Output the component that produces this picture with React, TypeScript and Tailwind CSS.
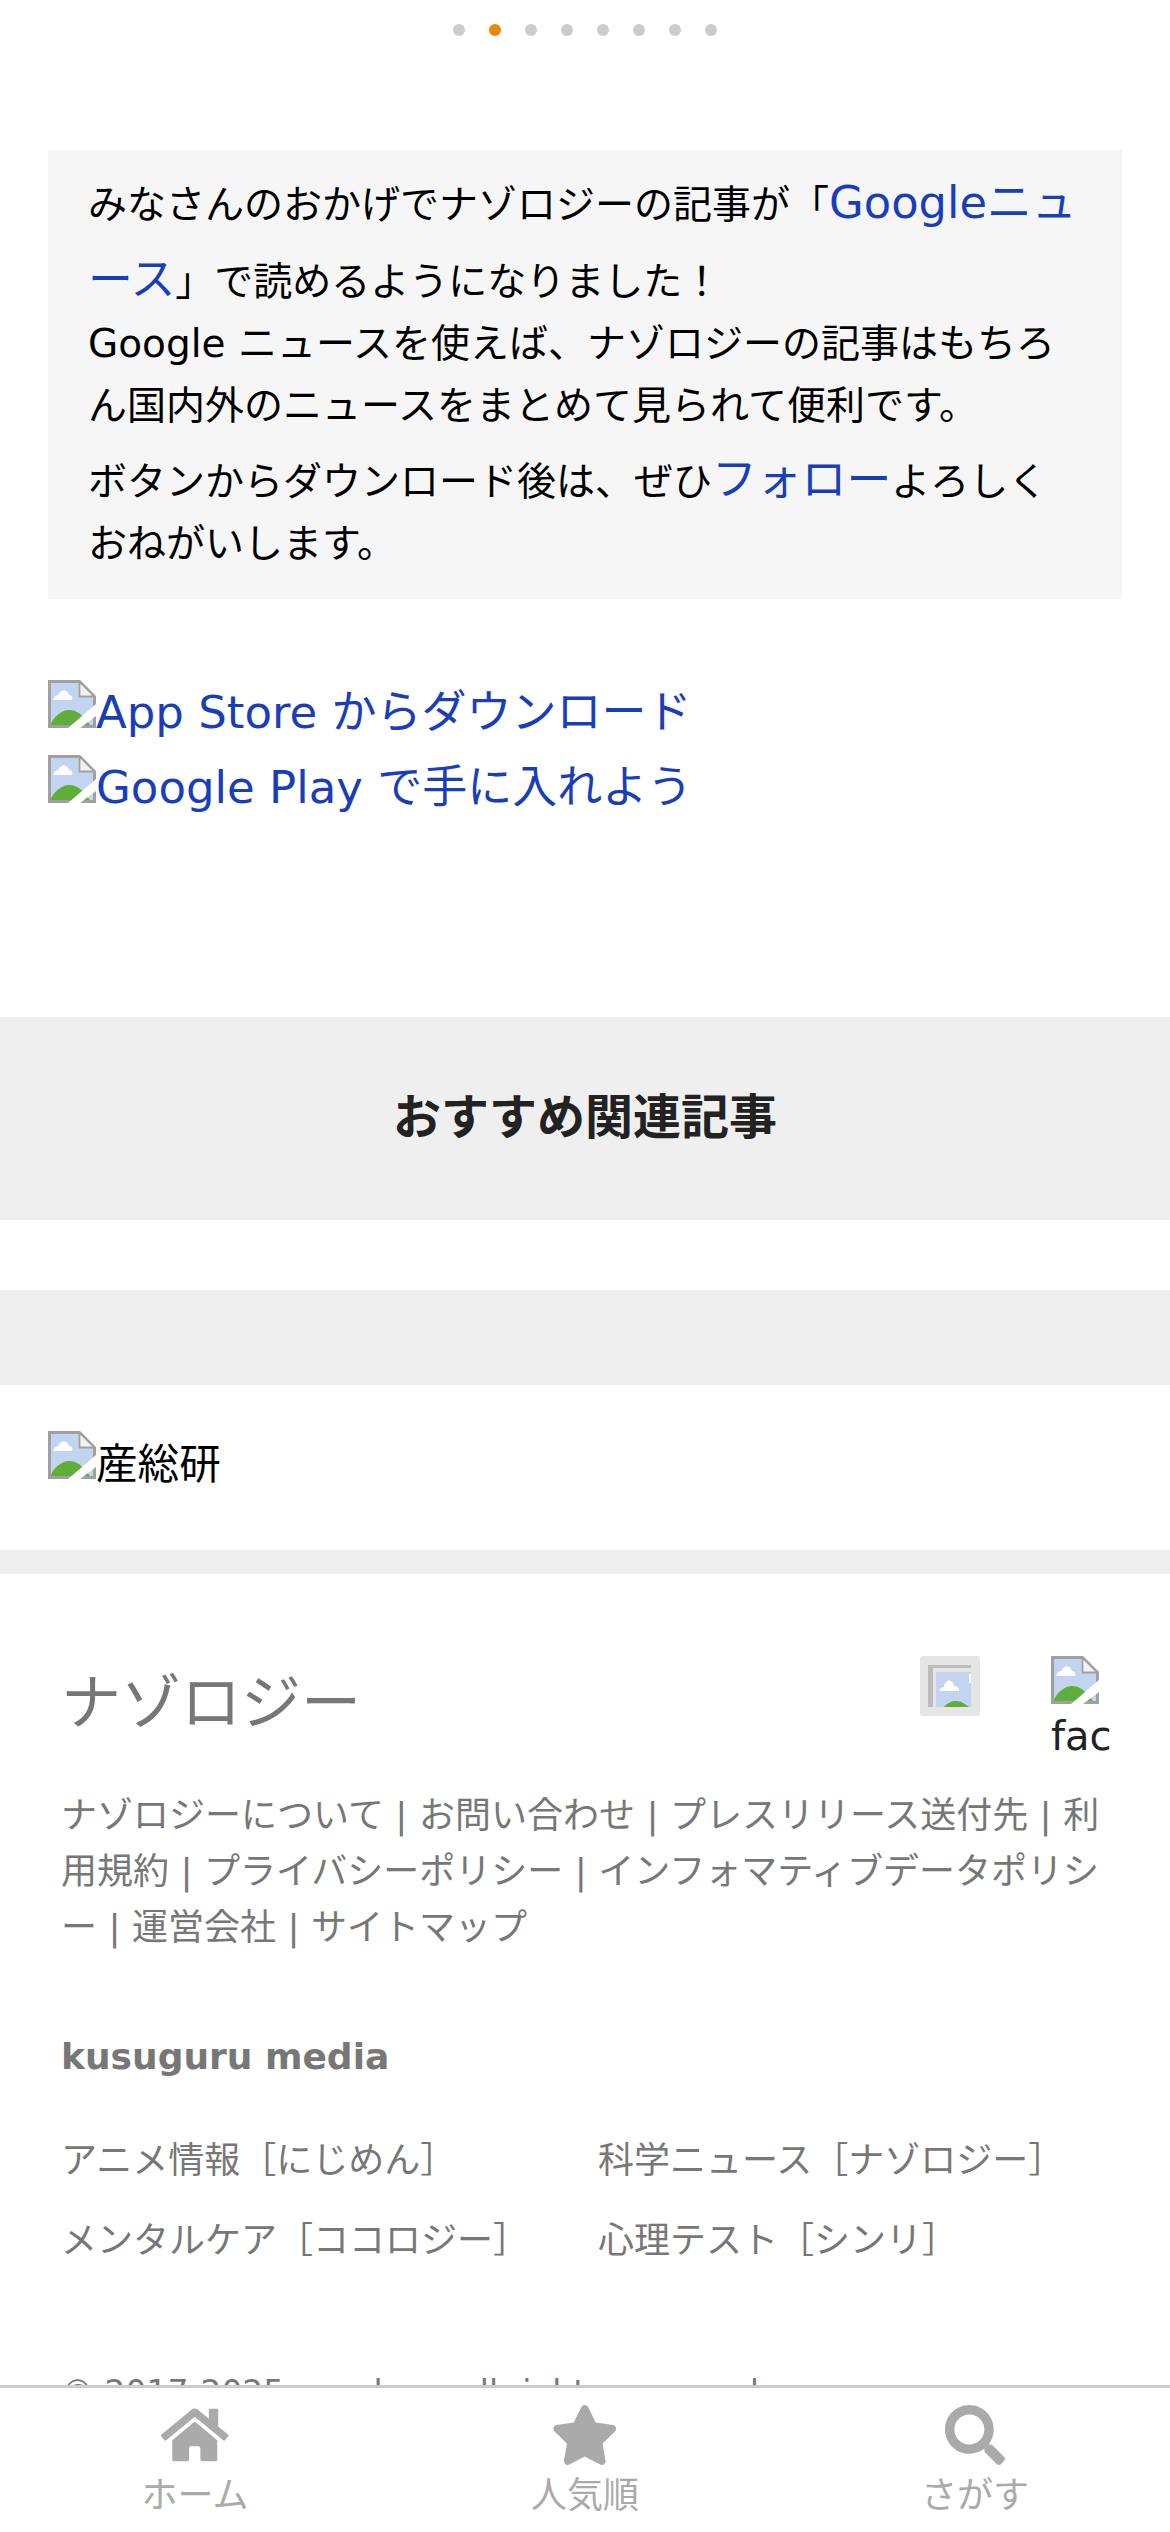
import { FaHome, FaStar, FaSearch } from "react-icons/fa";

function BrokenImage() {
  return (
    <svg viewBox="0 0 16 16" className="inline-block h-12 w-12 align-baseline">
      <path d="M0.5 0.5H10.5L15.5 5.5V15.5H0.5Z" fill="#c3d4f0" stroke="#a0a0a0" />
      <path d="M10.5 0.5V5.5H15.5Z" fill="#f2f2f2" stroke="#a0a0a0" strokeWidth="0.6" />
      <path d="M1.8 6.7C1.8 5.5 3 5 3.5 5C4 3 6.5 3 7 5C8 5 8.4 6 8 6.7Z" fill="#ffffff" />
      <path d="M1 15V14.5C2.5 11.5 5 10 7 10C9.5 10 11.5 11.5 14 15Z" fill="#5fae3a" />
      <path d="M6.7 16L16 8V12L10.7 16Z" fill="#ffffff" />
    </svg>
  );
}

function ClippedImage() {
  return (
    <svg viewBox="0 0 60 60" className="h-[60px] w-[60px]">
      <rect width="60" height="60" rx="3" fill="#e5e5e5" />
      <path d="M8 51V9H51V12H13V51Z" fill="#bcbcbc" />
      <rect x="16" y="16" width="35" height="35" fill="#c3d4f0" />
      <path d="M49 18H51V27H49Z" fill="#ffffff" />
      <path d="M20 35C20 32 22 31 24 31C25 23 33 23 34 30C37 30 40 32 39 35Z" fill="#ffffff" />
      <path d="M24 51C28 46 33 45 36 45C41 45 45 48 49 51Z" fill="#5fae3a" />
    </svg>
  );
}

const dots = [0, 1, 2, 3, 4, 5, 6, 7];

export default function App() {
  return (
    <div className="relative h-[2532px] w-[1170px] overflow-hidden bg-white font-['DejaVu_Sans','Noto_Sans_CJK_JP',sans-serif] text-[#000]">
      {/* Carousel dots */}
      <div className="flex justify-center gap-6 pt-6">
        {dots.map((d) => (
          <span
            key={d}
            className={d === 1 ? "h-3 w-3 rounded-full bg-[#e8890c]" : "h-3 w-3 rounded-full bg-[#cccccc]"}
          />
        ))}
      </div>

      {/* Notice box */}
      <div className="mx-12 mt-[114px] h-[449px] bg-[#f6f6f6] px-10 pt-[15px] text-[39px] leading-[62px]">
        <p className="h-[148px] leading-[75px]">
          みなさんのおかげでナゾロジーの記事が「<a className="text-[44.8px] text-[#1a3eb8]">Googleニュース</a>」で読めるようになりました！
        </p>
        <p>Google ニュースを使えば、ナゾロジーの記事はもちろん国内外のニュースをまとめて見られて便利です。</p>
        <p className="mt-3">
          ボタンからダウンロード後は、ぜひ<a className="text-[44.8px] text-[#1a3eb8]">フォロー</a>よろしくおねがいします。
        </p>
      </div>

      {/* Store links */}
      <div className="mx-12 mt-[76px] text-[45px] leading-[75px] text-[#1a3eb8]">
        <div><BrokenImage />App Store からダウンロード</div>
        <div><BrokenImage />Google Play で手に入れよう</div>
      </div>

      {/* Related heading */}
      <div className="mt-[192px] flex h-[203px] items-center justify-center bg-[#efefef] pb-1 text-[48px] font-bold text-[#222222]">
        おすすめ関連記事
      </div>
      <div className="mt-[70px] h-[95px] bg-[#efefef]" />
      <div className="h-[165px] px-12 pt-[46px] text-[41.6px] leading-[60px]">
        <div><BrokenImage />産総研</div>
      </div>
      <div className="h-6 bg-[#efefef]" />

      {/* Footer */}
      <div className="px-[61px] text-[36px] text-[#777777]">
        <div className="mt-[82px] flex items-start justify-between">
          <div className="mt-[9px] text-[60px] leading-[76px]">ナゾロジー</div>
          <div className="-mr-[6px] flex">
            <ClippedImage />
            <div className="ml-[71px] w-[64px] overflow-hidden text-[40px] leading-[46px] text-[#222222]">
              <BrokenImage />fac
            </div>
          </div>
        </div>
        <p className="mt-[29px] leading-[56px]">
          ナゾロジーについて | お問い合わせ | プレスリリース送付先 | 利用規約 | プライバシーポリシー | インフォマティブデータポリシー | 運営会社 | サイトマップ
        </p>
        <div className="mt-[74px] font-bold">kusuguru media</div>
        <div className="mt-[50px] grid grid-cols-[537px_1fr] gap-y-[26px] leading-[54px]">
          <span>アニメ情報［にじめん］</span>
          <span>科学ニュース［ナゾロジー］</span>
          <span>メンタルケア［ココロジー］</span>
          <span>心理テスト［シンリ］</span>
        </div>
        <p className="mt-[105px] text-[33px] leading-[40px]">© 2017-2025 nazology. all rights reserved.</p>
      </div>

      {/* Bottom navigation */}
      <nav className="absolute inset-x-0 bottom-0 grid h-[147px] grid-cols-3 border-t-[3px] border-[#cccccc] bg-white text-[36px] leading-[48px] text-[#aaaaaa]">
        <div className="flex flex-col items-center pt-[17px]">
          <FaHome className="h-[60px] w-[67.5px]" />
          <span className="mt-[7px]">ホーム</span>
        </div>
        <div className="flex flex-col items-center pt-[17px]">
          <FaStar className="h-[60px] w-[67.5px]" />
          <span className="mt-[7px]">人気順</span>
        </div>
        <div className="flex flex-col items-center pt-[17px]">
          <FaSearch className="h-[60px] w-[60px]" />
          <span className="mt-[7px]">さがす</span>
        </div>
      </nav>
    </div>
  );
}
